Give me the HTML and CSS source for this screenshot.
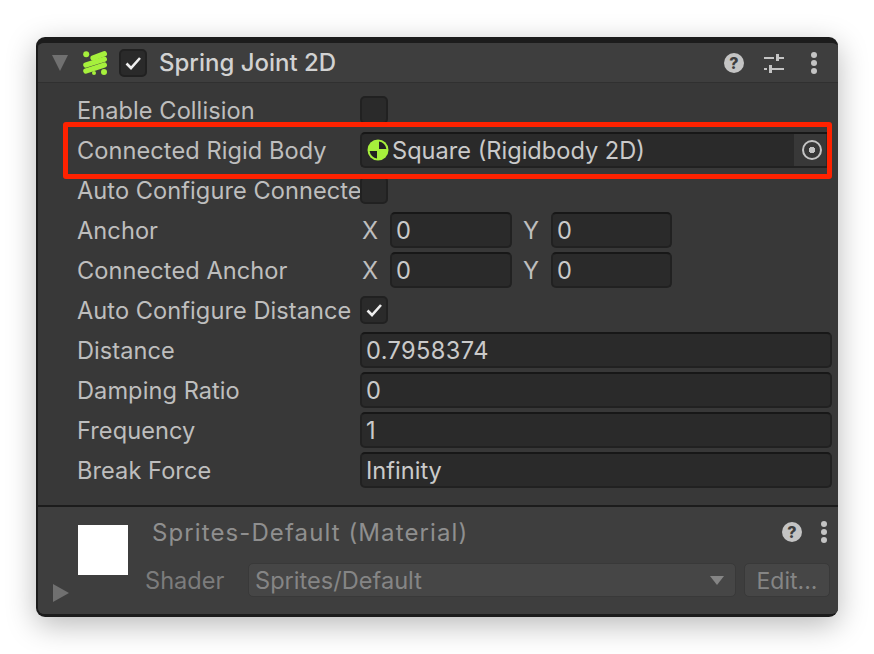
FILE: index.html
```html
<!DOCTYPE html>
<html lang="en">
<head>
  <meta charset="UTF-8" />
  <title>Spring Joint 2D</title>
  <link rel="stylesheet" href="styles.css">
</head>
<body>
  <div class="panel">
    <div class="header">
      <span class="fold-down"></span>
      <svg class="spring-icon" width="24" height="24" viewBox="0 0 24 24">
        <g fill="none" stroke="#a6f03c" stroke-width="5.2" stroke-linecap="round">
          <path d="M10 7 L21.4 2.8" />
          <path d="M2.8 14 L21.4 8.2" />
          <path d="M2.8 20 L21.4 14" />
        </g>
        <circle cx="3.2" cy="3.2" r="3" fill="#a6f03c" />
        <circle cx="11" cy="22" r="2" fill="#a6f03c" />
        <circle cx="21" cy="21" r="3" fill="#a6f03c" />
      </svg>
      <span class="check header-check">
        <svg width="18" height="16" viewBox="0 0 18 16"><path d="M2.5 8.5 L7 13 L16 3" fill="none" stroke="#eee" stroke-width="2.6" /></svg>
      </span>
      <span class="title">Spring Joint 2D</span>
      <span class="header-tools">
        <span class="help">?</span>
        <svg class="sliders" width="20" height="20" viewBox="0 0 20 20">
          <g fill="#c4c4c4">
            <rect x="0" y="4" width="10" height="2" />
            <rect x="12" y="1" width="3" height="7" />
            <rect x="12" y="4" width="8" height="2" />
            <rect x="0" y="15" width="3" height="2" />
            <rect x="5" y="12" width="3" height="8" />
            <rect x="5" y="15" width="15" height="2" />
          </g>
        </svg>
        <span class="dots"><i></i><i></i><i></i></span>
      </span>
    </div>

    <div class="rows">
      <div class="row"><span class="label">Enable Collision</span><span class="check"></span></div>
      <div class="row">
        <span class="label">Connected Rigid Body</span>
        <div class="field object-field">
          <svg class="target-icon" width="22" height="22" viewBox="0 0 22 22">
            <circle cx="11" cy="11" r="10.5" fill="#a6f03c" />
            <path d="M12 10 L12 2.6 A8.4 8.4 0 0 1 19.4 10 Z" fill="#222" />
            <path d="M10 12 L10 19.4 A8.4 8.4 0 0 1 2.6 12 Z" fill="#222" />
          </svg>
          <span class="object-name">Square (Rigidbody 2D)</span>
          <span class="picker"><i></i></span>
        </div>
      </div>
      <div class="row"><span class="label clip">Auto Configure Connecte</span><span class="check"></span></div>
      <div class="row">
        <span class="label">Anchor</span>
        <div class="vector">
          <span class="axis">X</span><div class="field small">0</div>
          <span class="axis">Y</span><div class="field small">0</div>
        </div>
      </div>
      <div class="row">
        <span class="label">Connected Anchor</span>
        <div class="vector">
          <span class="axis">X</span><div class="field small">0</div>
          <span class="axis">Y</span><div class="field small">0</div>
        </div>
      </div>
      <div class="row">
        <span class="label">Auto Configure Distance</span>
        <span class="check">
          <svg width="18" height="16" viewBox="0 0 18 16"><path d="M2.5 8.5 L7 13 L16 3" fill="none" stroke="#eee" stroke-width="2.6" /></svg>
        </span>
      </div>
      <div class="row"><span class="label">Distance</span><div class="field digits">0.7958374</div></div>
      <div class="row"><span class="label">Damping Ratio</span><div class="field">0</div></div>
      <div class="row"><span class="label">Frequency</span><div class="field">1</div></div>
      <div class="row"><span class="label">Break Force</span><div class="field">Infinity</div></div>
    </div>

    <div class="material">
      <span class="fold-right"></span>
      <div class="preview"></div>
      <div class="material-main">
        <div class="material-head">
          <span class="material-name">Sprites-Default (Material)</span>
          <span class="help">?</span>
          <span class="dots"><i></i><i></i><i></i></span>
        </div>
        <div class="shader-row">
          <span class="shader-label">Shader</span>
          <div class="dropdown">Sprites/Default<span class="arrow"></span></div>
          <div class="edit-btn">Edit...</div>
        </div>
      </div>
    </div>

    <div class="highlight"></div>
  </div>
</body>
</html>
```

FILE: styles.css
```css
* {
  box-sizing: border-box;
}
html, body {
  margin: 0;
  height: 100%;
  background: #fff;
  overflow: hidden;
}
body {
  padding: 37px 36px 37px 36px;
  font-family: Inter, "Liberation Sans", sans-serif;
  font-size: 23.6px;
  color: #bebebe;
}
.panel {
  position: relative;
  width: 802px;
  height: 580px;
  background: #383838;
  border: solid #1c1c1c;
  border-width: 6px 0 3px 2px;
  border-radius: 9px;
  box-shadow: 0 8px 30px rgba(0,0,0,0.28);
  display: flex;
  flex-direction: column;
}
.header {
  height: 40px;
  background: #3e3e3e;
  border-bottom: 1px solid #303030;
  border-radius: 6px 6px 0 0;
  display: flex;
  align-items: center;
  padding-left: 14px;
}
.fold-down {
  width: 0;
  height: 0;
  border: solid transparent;
  border-width: 16px 8px 0;
  border-top-color: #707070;
}
.spring-icon {
  margin-left: 15px;
}
.check {
  width: 28px;
  height: 28px;
  background: #2a2a2a;
  border: 2px solid #212121;
  border-radius: 5px;
  display: flex;
  align-items: center;
  justify-content: center;
}
.header-check {
  margin-left: 12px;
}
.title {
  margin-left: 12px;
  font-size: 24px;
  font-weight: 500;
  color: #d2d2d2;
}
.header-tools {
  margin-left: auto;
  display: flex;
  align-items: center;
  padding-right: 20px;
}
.help {
  width: 20px;
  height: 20px;
  flex: none;
  border-radius: 50%;
  background: #c4c4c4;
  color: #3e3e3e;
  font-size: 16px;
  font-weight: 800;
  line-height: 20px;
  text-align: center;
}
.sliders {
  margin-left: 20px;
}
.dots {
  margin-left: 26px;
  width: 8px;
  flex: none;
  display: flex;
  flex-direction: column;
  gap: 2px;
}
.dots i {
  width: 6px;
  height: 6px;
  border-radius: 50%;
  background: #c4c4c4;
  margin: 0 1px;
}
.rows {
  padding-top: 7px;
}
.row {
  height: 40px;
  display: flex;
  align-items: center;
  padding: 0 6px 0 39px;
}
.label {
  width: 283px;
  flex: none;
  white-space: nowrap;
  padding-top: 1px;
  letter-spacing: 0.06px;
}
.clip {
  overflow: hidden;
}
.field {
  flex: 1;
  height: 36px;
  background: #2a2a2a;
  border: 2px solid #212121;
  border-top-color: #171717;
  border-radius: 5px;
  padding-left: 4px;
  line-height: 34px;
  color: #cacaca;
}
.digits {
  letter-spacing: 0.4px;
}
.object-field {
  display: flex;
  align-items: center;
  padding: 0 6px 0 0;
  border-right: 0;
  border-radius: 5px 0 0 5px;
}
.target-icon {
  margin-left: 5px;
  flex: none;
}
.object-name {
  margin-left: 3px;
  padding-top: 2px;
  line-height: 30px;
}
.picker {
  margin-left: auto;
  width: 32px;
  height: 32px;
  padding-left: 4px;
  background: #383838;
  display: flex;
  align-items: center;
  justify-content: center;
}
.picker i {
  width: 20px;
  height: 20px;
  border: 2px solid #c4c4c4;
  border-radius: 50%;
  background: radial-gradient(circle, #c4c4c4 0 3px, transparent 3.5px);
}
.vector {
  display: flex;
  align-items: center;
}
.axis {
  width: 30px;
  flex: none;
  padding: 1px 0 0 2px;
}
.axis + .field + .axis {
  width: 39px;
  padding-left: 11px;
}
.small {
  flex: none;
  width: 122px;
}
.axis + .field + .axis + .small {
  width: 121px;
}
.material {
  margin-top: auto;
  height: 109px;
  background: #3e3e3e;
  border-top: 2px solid #1c1c1c;
  border-radius: 0 0 6px 6px;
  display: flex;
  padding-left: 15px;
}
.fold-right {
  margin-top: 77px;
  width: 0;
  height: 0;
  flex: none;
  border: solid transparent;
  border-width: 9px 0 9px 16px;
  border-left-color: #707070;
}
.preview {
  margin: 18px 0 0 9px;
  width: 50px;
  height: 50px;
  background: #fff;
  flex: none;
}
.material-main {
  flex: 1;
  margin-left: 17px;
  padding-right: 8px;
}
.material-head {
  height: 50px;
  display: flex;
  align-items: center;
  padding: 0 2px 0 7px;
}
.material-name {
  flex: 1;
  font-size: 24px;
  letter-spacing: 1.1px;
  color: #8f8f8f;
}
.material-head .dots {
  margin-left: 18px;
}
.shader-row {
  display: flex;
  align-items: center;
  gap: 8px;
  margin-top: 6px;
}
.shader-label {
  width: 95px;
  flex: none;
  color: #7c7c7c;
  padding-top: 1px;
}
.dropdown, .edit-btn {
  height: 34px;
  background: #464646;
  border: 1px solid #393939;
  border-radius: 5px;
  line-height: 33px;
  color: #858585;
}
.dropdown {
  flex: 1;
  padding: 1px 11px 0 6px;
  display: flex;
  justify-content: space-between;
  align-items: center;
}
.arrow {
  width: 0;
  height: 0;
  border: solid transparent;
  border-width: 9px 7px 0;
  border-top-color: #858585;
}
.edit-btn {
  width: 86px;
  text-align: center;
  font-size: 23px;
  padding-top: 1px;
}
.highlight {
  position: absolute;
  left: 25px;
  top: 79px;
  width: 769px;
  height: 57px;
  border: 5px solid #ff2200;
  border-radius: 3px;
  pointer-events: none;
}
```
